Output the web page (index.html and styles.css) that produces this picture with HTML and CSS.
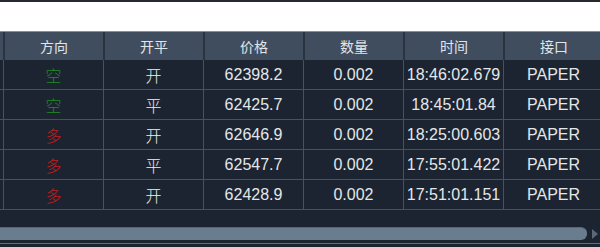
FILE: index.html
```html
<!DOCTYPE html>
<html lang="zh">
<head>
<meta charset="utf-8">
<link rel="stylesheet" href="styles.css">
</head>
<body>
<div class="topstrip"></div>
<div class="blank"></div>
<div class="grid">
  <div class="row head">
    <div class="cell stub"></div>
    <div class="cell">方向</div>
    <div class="cell">开平</div>
    <div class="cell">价格</div>
    <div class="cell">数量</div>
    <div class="cell">时间</div>
    <div class="cell">接口</div>
  </div>
  <div class="row">
    <div class="cell stub"></div>
    <div class="cell cn short">空</div>
    <div class="cell cn">开</div>
    <div class="cell">62398.2</div>
    <div class="cell">0.002</div>
    <div class="cell">18:46:02.679</div>
    <div class="cell">PAPER</div>
  </div>
  <div class="row">
    <div class="cell stub"></div>
    <div class="cell cn short">空</div>
    <div class="cell cn">平</div>
    <div class="cell">62425.7</div>
    <div class="cell">0.002</div>
    <div class="cell">18:45:01.84</div>
    <div class="cell">PAPER</div>
  </div>
  <div class="row">
    <div class="cell stub"></div>
    <div class="cell cn long">多</div>
    <div class="cell cn">开</div>
    <div class="cell">62646.9</div>
    <div class="cell">0.002</div>
    <div class="cell">18:25:00.603</div>
    <div class="cell">PAPER</div>
  </div>
  <div class="row">
    <div class="cell stub"></div>
    <div class="cell cn long">多</div>
    <div class="cell cn">平</div>
    <div class="cell">62547.7</div>
    <div class="cell">0.002</div>
    <div class="cell">17:55:01.422</div>
    <div class="cell">PAPER</div>
  </div>
  <div class="row">
    <div class="cell stub"></div>
    <div class="cell cn long">多</div>
    <div class="cell cn">开</div>
    <div class="cell">62428.9</div>
    <div class="cell">0.002</div>
    <div class="cell">17:51:01.151</div>
    <div class="cell">PAPER</div>
  </div>
  <div class="filler"></div>
  <div class="scrollbar">
    <div class="thumb"></div>
    <div class="arrow"></div>
  </div>
  <div class="footer">
    <span class="tick"></span><span class="tick"></span>
  </div>
</div>
</body>
</html>
```
FILE: styles.css
```css
html, body {
  margin: 0;
  padding: 0;
  background: #1b2430;
  width: 600px;
  height: 247px;
  overflow: hidden;
}
.topstrip {
  height: 2px;
  background: #262a2e;
}
.blank {
  height: 29px;
  background: #ffffff;
}
.grid {
  width: 600px;
  overflow: hidden;
  background: #1b2430;
  font-family: "Liberation Sans", Arial, "Noto Sans CJK SC", sans-serif;
  color: #e4e7ea;
}
.row {
  display: grid;
  grid-template-columns: 3px repeat(6, 100px);
  height: 30px;
  border-bottom: 1px solid #47525f;
  box-sizing: border-box;
  font-size: 16px;
}
.row.head {
  height: 29px;
  border-top: 1px solid #5c9ec4;
  border-bottom: none;
  background: #404d5e;
  font-family: "Noto Sans CJK SC", sans-serif;
  font-size: 14px;
  color: #e2e6ea;
}
.cell {
  display: flex;
  align-items: center;
  justify-content: center;
  border-left: 1px solid #47525f;
  white-space: nowrap;
}
.cell.stub {
  border-left: none;
}
.head .cell {
  border-left: 2px solid #2a3441;
}
.head .cell.stub {
  border-left: none;
}
.cn {
  font-family: "Noto Sans CJK SC", sans-serif;
  font-size: 16px;
  font-weight: 300;
  color: #f0f0f0;
}
.short {
  color: #1f8a24;
}
.long {
  color: #c81c1c;
}
.filler {
  height: 17px;
}
.scrollbar {
  display: flex;
  align-items: center;
  height: 13px;
  gap: 5px;
}
.thumb {
  width: 587px;
  height: 13px;
  background: #6a7d8f;
  border-top: 1px solid #566779;
  box-sizing: border-box;
  border-radius: 0 6px 6px 0;
}
.arrow {
  width: 0;
  height: 0;
  border-top: 5px solid transparent;
  border-bottom: 5px solid transparent;
  border-left: 6px solid #5a6877;
}
.footer {
  margin-top: 3px;
  height: 1px;
  background: #3a78aa;
  position: relative;
}
```
